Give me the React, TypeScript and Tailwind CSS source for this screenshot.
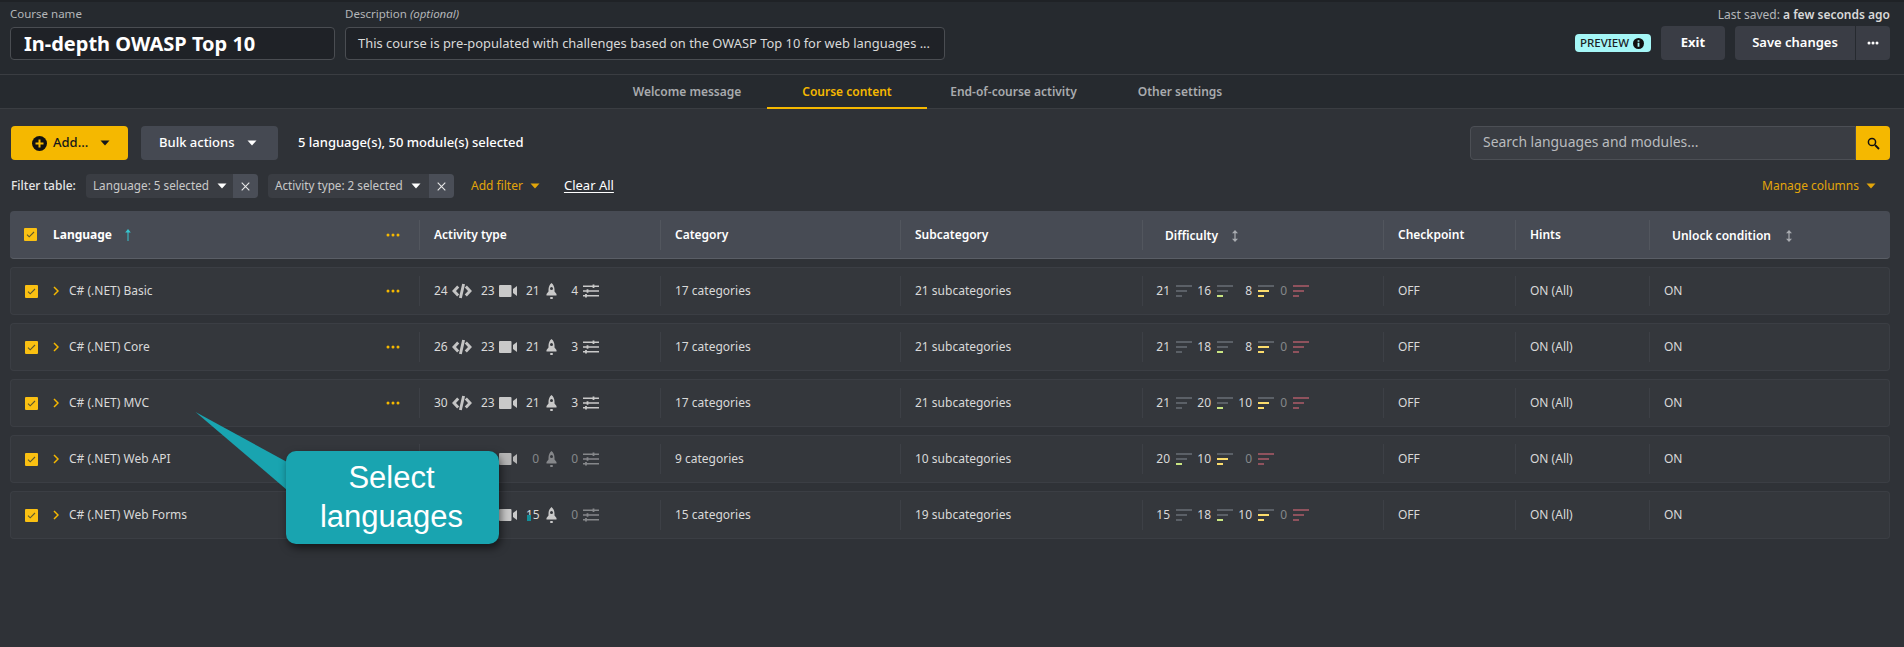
import React from "react";

const F = "font-['Noto_Sans','Open_Sans',sans-serif]";

function Caret({ className = "" }: { className?: string }) {
  return (
    <svg width="10" height="6" viewBox="0 0 10 6" className={`shrink-0 ${className}`}>
      <path d="M0.5 0.5h9L5 5.5z" fill="currentColor" />
    </svg>
  );
}

function Check() {
  return (
    <div className="flex items-center justify-center shrink-0 w-[13px] h-[13px] rounded-[1px] bg-[#fac012]">
      <svg width="9" height="7" viewBox="0 0 9 7">
        <path d="M1 3.6l2.2 2.2L8 1" fill="none" stroke="#5b5630" strokeWidth="1.1" />
      </svg>
    </div>
  );
}

function Dots() {
  return (
    <svg width="14" height="4" viewBox="0 0 14 4">
      <circle cx="2" cy="2" r="1.5" fill="#f5b800" />
      <circle cx="7" cy="2" r="1.5" fill="#f5b800" />
      <circle cx="12" cy="2" r="1.5" fill="#f5b800" />
    </svg>
  );
}

function SortBoth() {
  return (
    <svg width="6" height="12" viewBox="0 0 6 12">
      <path d="M3 0L6 3.2H3.6v5.6H6L3 12 0 8.8h2.4V3.2H0z" fill="#a8abb0" />
    </svg>
  );
}

function CodeIcon({ dim }: { dim?: boolean }) {
  return (
    <svg width="20" height="16" viewBox="0 0 20 16" className={`shrink-0 ${dim ? "text-[#85878a]" : "text-[#c4c4c4]"}`}>
      <path d="M6.2 3.5L2 8l4.2 4.5M13.8 3.5L18 8l-4.2 4.5M11.6 1L8.4 15" fill="none" stroke="currentColor" strokeWidth="2.9" />
    </svg>
  );
}

function VideoIcon({ dim }: { dim?: boolean }) {
  return (
    <svg width="18" height="12" viewBox="0 0 18 12" className={`shrink-0 ${dim ? "text-[#b5b5b5]" : "text-[#c9c9c9]"}`}>
      <rect x="0" y="0" width="12.5" height="12" rx="1" fill="currentColor" />
      <path d="M14 4L18 1v10l-4-3z" fill="currentColor" />
    </svg>
  );
}

function RocketIcon({ dim }: { dim?: boolean }) {
  return (
    <svg width="11" height="16" viewBox="0 0 11 16" className={`shrink-0 ${dim ? "text-[#85878a]" : "text-[#c9c9c9]"}`}>
      <path fillRule="evenodd" d="M5.5 0C7.5 1.6 8.5 4 8.5 6.5V8.5L10.5 11V12.5H0.5V11L2.5 8.5V6.5C2.5 4 3.5 1.6 5.5 0zM5.5 4a1.5 1.5 0 1 0 0 3 1.5 1.5 0 0 0 0-3z" fill="currentColor" />
      <rect x="4" y="14" width="3" height="2" rx="1" fill="currentColor" />
    </svg>
  );
}

function SlidersIcon({ dim }: { dim?: boolean }) {
  return (
    <svg width="16" height="14" viewBox="0 0 16 14" className={`shrink-0 ${dim ? "text-[#85878a]" : "text-[#c9c9c9]"}`}>
      <path d="M0 2.2h16M0 7h16M0 11.8h16" stroke="currentColor" strokeWidth="1.6" />
      <path d="M10.5 0.5v3.4M4.5 5.3v3.4M3 10.1v3.4" stroke="currentColor" strokeWidth="1.8" />
    </svg>
  );
}

function Bars({ c1, c2, c3 }: { c1: string; c2: string; c3: string }) {
  return (
    <svg width="16" height="12" viewBox="0 0 16 12" className="shrink-0">
      <rect x="0" y="0" width="16" height="2" fill={c1} />
      <rect x="0" y="5" width="11" height="2" fill={c2} />
      <rect x="0" y="10" width="6" height="2" fill={c3} />
    </svg>
  );
}

const G = "#5b6067";
const R = "#8f525d";

function Close() {
  return (
    <span className="flex items-center justify-center ml-auto w-[25px] h-[24px] rounded-r-sm bg-[#4a4e57]">
      <svg width="9" height="9" viewBox="0 0 9 9">
        <path d="M0.7 0.7l7.6 7.6M8.3 0.7L0.7 8.3" stroke="#e8e8e8" strokeWidth="1.1" />
      </svg>
    </span>
  );
}

type Kind = "easy" | "medium" | "hard" | "expert";

function Diff({ v, w, kind }: { v: number; w: string; kind: Kind }) {
  const bars = {
    easy: <Bars c1={G} c2={G} c3={G} />,
    medium: <Bars c1={G} c2={G} c3="#c9e582" />,
    hard: <Bars c1={G} c2="#fbdc6c" c3="#fbdc6c" />,
    expert: <Bars c1={R} c2={R} c3={R} />,
  }[kind];
  return (
    <div className={`flex items-center justify-end gap-[6px] ${w}`}>
      <span className={v === 0 ? "text-[#85878a]" : ""}>{v}</span>
      {bars}
    </div>
  );
}

const rows = [
  { name: "C# (.NET) Basic", a: [24, 23, 21, 4], cat: "17 categories", sub: "21 subcategories", d: [21, 16, 8, 0], k: ["easy", "medium", "hard", "expert"] },
  { name: "C# (.NET) Core", a: [26, 23, 21, 3], cat: "17 categories", sub: "21 subcategories", d: [21, 18, 8, 0], k: ["easy", "medium", "hard", "expert"] },
  { name: "C# (.NET) MVC", a: [30, 23, 21, 3], cat: "17 categories", sub: "21 subcategories", d: [21, 20, 10, 0], k: ["easy", "medium", "hard", "expert"] },
  { name: "C# (.NET) Web API", a: [20, 10, 0, 0], cat: "9 categories", sub: "10 subcategories", d: [20, 10, 0], k: ["medium", "hard", "expert"] },
  { name: "C# (.NET) Web Forms", a: [20, 23, 15, 0], cat: "15 categories", sub: "19 subcategories", d: [15, 18, 10, 0], k: ["easy", "medium", "hard", "expert"] },
];

const cols = "grid grid-cols-[409px_241px_240px_242px_241px_132px_134px_241px]";
const widths = ["w-[35px]", "w-[41px]", "w-[41px]", "w-[35px]"];

function Cell({ children, className = "" }: { children: React.ReactNode; className?: string }) {
  return (
    <div className={`flex items-center h-[30px] border-l border-[#3d4046] pl-[14px] ${className}`}>{children}</div>
  );
}

function HCell({ children, className = "" }: { children: React.ReactNode; className?: string }) {
  return (
    <div className={`flex items-center h-[30px] border-l border-[#52565e] pl-[14px] font-semibold text-white ${className}`}>{children}</div>
  );
}

function Row({ r }: { r: (typeof rows)[number] }) {
  const dim = (n: number) => (n === 0 ? "text-[#85878a]" : "");
  return (
    <div className={`${cols} items-center h-[48px] rounded ring-1 ring-inset ring-[#3b3e44] bg-[#34373c] text-[#d9d9d9]`}>
      <div className="flex items-center pl-[15px] pr-[19px]">
        <Check />
        <svg width="6" height="10" viewBox="0 0 6 10" className="ml-[15px] shrink-0">
          <path d="M1 1l4 4-4 4" fill="none" stroke="#f5b800" strokeWidth="1.5" />
        </svg>
        <span className="ml-[10px]">{r.name}</span>
        <span className="ml-auto flex"><Dots /></span>
      </div>
      <Cell>
        <span className="w-[14px]">{r.a[0]}</span>
        <span className="ml-[4px] flex"><CodeIcon /></span>
        <span className="ml-[9px] w-[14px]">{r.a[1]}</span>
        <span className="ml-[4px] flex"><VideoIcon dim={r.a[2] === 0} /></span>
        <span className={`ml-[9px] w-[13px] text-right ${dim(r.a[2])}`}>{r.a[2]}</span>
        <span className="ml-[7px] flex"><RocketIcon dim={r.a[2] === 0} /></span>
        <span className={`ml-[7px] w-[14px] text-right ${dim(r.a[3])}`}>{r.a[3]}</span>
        <span className="ml-[5px] flex"><SlidersIcon dim={r.a[3] === 0} /></span>
      </Cell>
      <Cell>{r.cat}</Cell>
      <Cell>{r.sub}</Cell>
      <Cell>
        {r.d.map((v, i) => (
          <Diff key={i} v={v} w={widths[i]} kind={r.k[i] as Kind} />
        ))}
      </Cell>
      <Cell>OFF</Cell>
      <Cell>ON (All)</Cell>
      <Cell>ON</Cell>
    </div>
  );
}

export default function App() {
  return (
    <div className={`relative w-[1904px] h-[647px] overflow-hidden bg-[#2f3237] text-[12px] text-[#d9d9d9] ${F}`}>
      <div className="flex flex-col h-[75px] bg-[#262a2f] border-t-2 border-[#1f2226] border-b border-b-[#3a3d42] pl-[10px] pr-[14px]">
        <div className="flex items-start">
          <div className="flex flex-col w-[325px]">
            <span className="h-[25px] pt-[3px] text-[11.5px] text-[#b4b6b9]">Course name</span>
            <div className="flex items-center h-[33px] border border-[#4a4d52] rounded-sm bg-[#1f2227] px-[13px] text-[20px] font-bold text-white">In-depth OWASP Top 10</div>
          </div>
          <div className="flex flex-col w-[600px] ml-[10px]">
            <span className="h-[25px] pt-[3px] text-[11.5px] text-[#b4b6b9]">Description <i>(optional)</i></span>
            <div className="flex items-center h-[33px] border border-[#4a4d52] rounded-sm bg-[#1f2227] px-[12px] text-[12.9px] text-[#d9d9d9] whitespace-nowrap">This course is pre-populated with challenges based on the OWASP Top 10 for web languages ...</div>
          </div>
          <div className="flex flex-col items-end ml-auto">
            <span className="h-[24px] pt-[4px] text-[12px] text-[#b4b6b9]">Last saved: <b className="font-semibold text-[#d9d9d9]">a few seconds ago</b></span>
            <div className="flex items-center">
              <span className="flex items-center gap-[4px] h-[18px] px-[5px] w-[76px] rounded-sm bg-[#a5f7f7] text-[11.5px] font-medium text-[#1c2024]">
                PREVIEW
                <svg width="11" height="11" viewBox="0 0 11 11" className="shrink-0">
                  <circle cx="5.5" cy="5.5" r="5.5" fill="#111" />
                  <path d="M4.6 2.2h1.8v1.5H4.6zM4.6 4.7h1.8v4H4.6z" fill="#a5f7f7" />
                </svg>
              </span>
              <button className="ml-[10px] w-[64px] h-[34px] rounded bg-[#3a3d45] text-[13px] font-bold text-white">Exit</button>
              <button className="ml-[10px] w-[120px] h-[34px] rounded-l bg-[#3a3d45] text-[13px] font-semibold text-white">Save changes</button>
              <button className="flex items-center justify-center w-[35px] h-[34px] rounded-r border-l border-[#262a2f] bg-[#3a3d45]">
                <svg width="12" height="4" viewBox="0 0 12 4"><circle cx="2" cy="2" r="1.5" fill="#fff" /><circle cx="6" cy="2" r="1.5" fill="#fff" /><circle cx="10" cy="2" r="1.5" fill="#fff" /></svg>
              </button>
            </div>
          </div>
        </div>
      </div>

      <div className="flex pl-[607px] h-[34px] bg-[#262a2f] border-b border-[#3a3d42] text-[12px] font-semibold text-[#a9abae]">
        <div className="flex items-center justify-center w-[160px] h-[34px]">Welcome message</div>
        <div className="flex items-center justify-center w-[160px] h-[34px] pt-[2px] border-b-[2px] border-[#f5b800] text-[#f5b800]">Course content</div>
        <div className="flex items-center justify-center w-[173px] h-[34px]">End-of-course activity</div>
        <div className="flex items-center justify-center w-[160px] h-[34px]">Other settings</div>
      </div>

      <div className="pl-[11px] pr-[14px]">
        <div className="flex items-center h-[34px] mt-[17px]">
          <button className="flex items-center w-[117px] h-[34px] pl-[21px] rounded bg-[#f5b800] text-[13px] font-medium text-[#16181b]">
            <svg width="15" height="15" viewBox="0 0 15 15" className="shrink-0">
              <circle cx="7.5" cy="7.5" r="7.5" fill="#111" />
              <path d="M7.5 3.5v8M3.5 7.5h8" stroke="#f5b800" strokeWidth="2" />
            </svg>
            <span className="ml-[6px]">Add...</span>
            <Caret className="ml-[12px]" />
          </button>
          <button className="flex items-center w-[137px] h-[34px] ml-[13px] pl-[18px] rounded bg-[#454952] text-[13px] font-medium text-white">
            Bulk actions
            <Caret className="ml-[12px]" />
          </button>
          <span className="ml-[20px] text-[13px] font-medium text-white">5 language(s), 50 module(s) selected</span>
          <div className="flex items-center ml-auto w-[420px] h-[34px]">
            <div className="flex items-center flex-1 h-[34px] px-[12px] pb-[1px] rounded-l border border-[#4c4f55] bg-[#3a3d43] text-[13.9px] text-[#b9bbbe]">Search languages and modules...</div>
            <div className="flex items-center justify-center w-[34px] h-[34px] rounded-r bg-[#f5b800]">
              <svg width="13" height="13" viewBox="0 0 13 13"><circle cx="5" cy="5" r="3.6" fill="none" stroke="#111" strokeWidth="1.5" /><path d="M8 8l4 4" stroke="#111" strokeWidth="1.8" /></svg>
            </div>
          </div>
        </div>

        <div className="flex items-center h-[24px] mt-[14px] text-[12px]">
          <span className="w-[75px] font-medium text-[#e5e5e5]">Filter table:</span>
          <div className="flex items-center h-[24px] w-[172px] rounded-sm bg-[#3a3d43] text-[11.7px]">
            <span className="pl-[7px] text-[#c9c9c9]">Language: 5 selected</span>
            <Caret className="ml-[8px] text-white" />
            <Close />
          </div>
          <div className="flex items-center h-[24px] w-[186px] ml-[10px] rounded-sm bg-[#3a3d43] text-[11.7px]">
            <span className="pl-[7px] text-[#c9c9c9]">Activity type: 2 selected</span>
            <Caret className="ml-[8px] text-white" />
            <Close />
          </div>
          <span className="ml-[17px] text-[#e2a50a]">Add filter</span>
          <Caret className="ml-[7px] text-[#e2a50a]" />
          <span className="ml-[24px] text-[13px] text-white underline underline-offset-2">Clear All</span>
          <span className="ml-auto text-[#e2a50a]">Manage columns</span>
          <Caret className="ml-[7px] mr-[14px] text-[#e2a50a]" />
        </div>

        <div className={`${cols} items-center h-[48px] mt-[13px] -ml-px rounded bg-[#474b54] border-b border-[#5a5e66] text-[12px]`}>
          <div className="flex items-center pl-[14px] pr-[19px]">
            <Check />
            <span className="ml-[16px] pt-[1px] font-bold text-white">Language</span>
            <svg width="6" height="12" viewBox="0 0 6 12" className="ml-[13px]"><path d="M3 0L5.8 3.4H3.5V12h-1V3.4H0.2z" fill="#37c6cf" /></svg>
            <span className="ml-auto flex"><Dots /></span>
          </div>
          <HCell>Activity type</HCell>
          <HCell>Category</HCell>
          <HCell>Subcategory</HCell>
          <HCell className="pl-[22px] pt-[2px]">Difficulty<span className="ml-[14px] flex"><SortBoth /></span></HCell>
          <HCell>Checkpoint</HCell>
          <HCell>Hints</HCell>
          <HCell className="pl-[22px] pt-[2px]">Unlock condition<span className="ml-[15px] flex"><SortBoth /></span></HCell>
        </div>

        <div className="flex flex-col gap-[8px] mt-[8px] -ml-px">
          {rows.map((r) => <Row key={r.name} r={r} />)}
        </div>
      </div>

      <div className="absolute left-[195px] top-[412px] w-[304px] h-[132px]">
        <svg width="92" height="80" viewBox="0 0 92 80" className="absolute left-0 top-0">
          <path d="M0.5 0L92 50V78z" fill="#19a4b0" />
        </svg>
        <div className="absolute left-[91px] top-[39px] flex items-center justify-center w-[213px] h-[93px] rounded-[10px] bg-[#19a4b0] shadow-[2px_4px_8px_rgba(0,0,0,0.55)] text-center font-['Liberation_Sans',sans-serif] text-[31px] leading-[38.5px] text-white pr-[2px]">
          Select<br />languages
        </div>
      </div>
      <div className="absolute left-[527px] top-[515px] w-[4px] h-[6px] bg-[#128e99]" />
    </div>
  );
}
